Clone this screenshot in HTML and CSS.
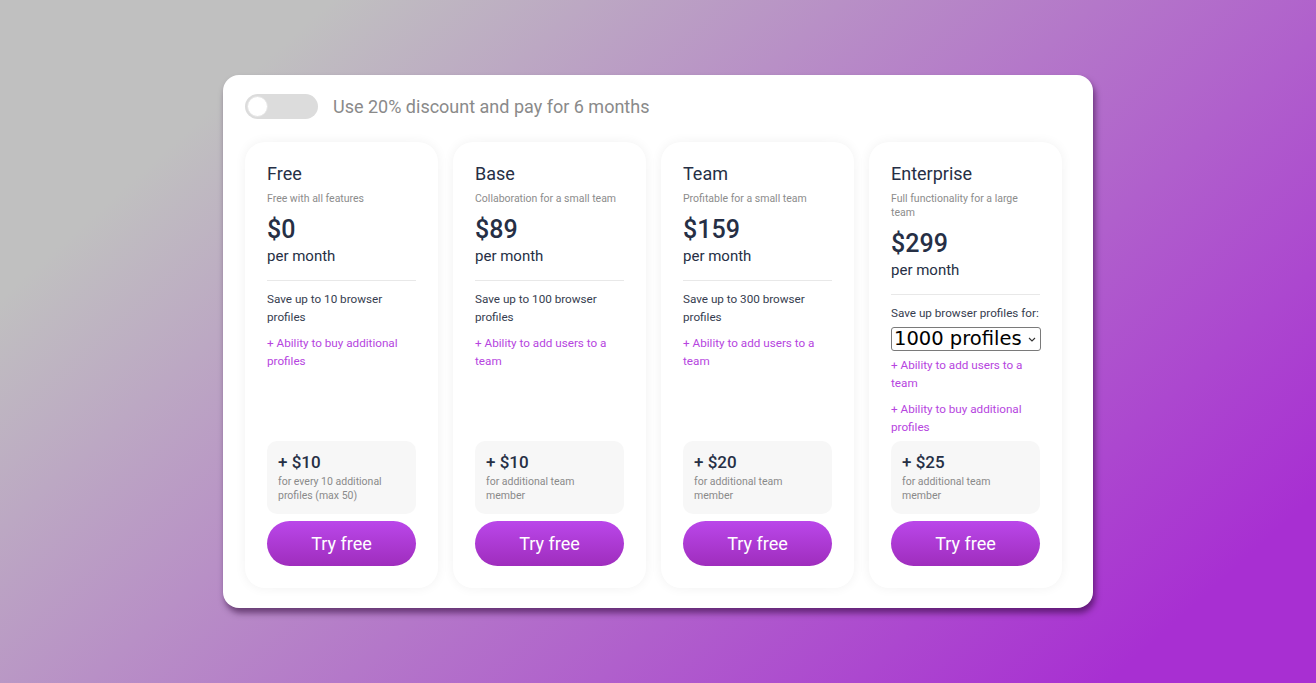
FILE: index.html
```html
<!DOCTYPE html>
<html lang="en">
<head>
<meta charset="utf-8">
<title>Pricing</title>
<link rel="stylesheet" href="styles.css">
</head>
<body>
<div class="page">
  <div class="panel">
    <div class="discount">
      <span class="toggle"><span class="knob"></span></span>
      <span class="discount-text">Use 20% discount and pay for 6 months</span>
    </div>
    <div class="plans">
      <div class="card">
        <div class="name">Free</div>
        <div class="desc">Free with all features</div>
        <div class="price">$0</div>
        <div class="period">per month</div>
        <div class="divider"></div>
        <div class="features">
          <div class="feat">Save up to 10 browser profiles</div>
          <div class="feat extra">+ Ability to buy additional profiles</div>
        </div>
        <div class="foot">
          <div class="addon">
            <div class="addon-price">+ $10</div>
            <div class="addon-note">for every 10 additional profiles (max 50)</div>
          </div>
          <button class="btn">Try free</button>
        </div>
      </div>
      <div class="card">
        <div class="name">Base</div>
        <div class="desc">Collaboration for a small team</div>
        <div class="price">$89</div>
        <div class="period">per month</div>
        <div class="divider"></div>
        <div class="features">
          <div class="feat">Save up to 100 browser profiles</div>
          <div class="feat extra">+ Ability to add users to a team</div>
        </div>
        <div class="foot">
          <div class="addon">
            <div class="addon-price">+ $10</div>
            <div class="addon-note">for additional team member</div>
          </div>
          <button class="btn">Try free</button>
        </div>
      </div>
      <div class="card">
        <div class="name">Team</div>
        <div class="desc">Profitable for a small team</div>
        <div class="price">$159</div>
        <div class="period">per month</div>
        <div class="divider"></div>
        <div class="features">
          <div class="feat">Save up to 300 browser profiles</div>
          <div class="feat extra">+ Ability to add users to a team</div>
        </div>
        <div class="foot">
          <div class="addon">
            <div class="addon-price">+ $20</div>
            <div class="addon-note">for additional team member</div>
          </div>
          <button class="btn">Try free</button>
        </div>
      </div>
      <div class="card">
        <div class="name">Enterprise</div>
        <div class="desc">Full functionality for a large team</div>
        <div class="price">$299</div>
        <div class="period">per month</div>
        <div class="divider"></div>
        <div class="features">
          <div class="feat">Save up browser profiles for:</div>
          <div class="select-wrap">
            <select class="select">
              <option>1000 profiles</option>
              <option>2000 profiles</option>
            </select>
            <svg class="chev" width="8" height="5" viewBox="0 0 8 5" aria-hidden="true"><path d="M1 1 L4 4 L7 1" fill="none" stroke="#333" stroke-width="1.1"/></svg>
          </div>
          <div class="feat extra tight">+ Ability to add users to a team</div>
          <div class="feat extra">+ Ability to buy additional profiles</div>
        </div>
        <div class="foot">
          <div class="addon">
            <div class="addon-price">+ $25</div>
            <div class="addon-note">for additional team member</div>
          </div>
          <button class="btn">Try free</button>
        </div>
      </div>
    </div>
  </div>
</div>
</body>
</html>
```

FILE: styles.css
```css
* { box-sizing: border-box; }
html, body { margin: 0; padding: 0; }
body {
  width: 1316px;
  height: 683px;
  overflow: hidden;
  font-family: Roboto, "Liberation Sans", sans-serif;
  background: linear-gradient(138deg, #c0c0c0 16%, #a82fd2 90%);
  color: #262f45;
}
.page {
  padding: 75px 0 0 223px;
}
.panel {
  width: 870px;
  height: 533px;
  background: #fff;
  border-radius: 16px;
  padding: 19px 31px 20px 22px;
  box-shadow: 2px 5px 6px rgba(40, 0, 50, 0.55);
  display: flex;
  flex-direction: column;
}
.discount {
  display: flex;
  align-items: center;
  height: 25px;
}
.toggle {
  width: 73px;
  height: 25px;
  border-radius: 13px;
  background: #dcdcdc;
  display: flex;
  align-items: center;
  padding-left: 2px;
}
.knob {
  width: 21px;
  height: 21px;
  border-radius: 50%;
  background: #fff;
  border: 1px solid #e4e4e4;
}
.discount-text {
  margin-left: 15px;
  font-size: 18px;
  color: #8a8a8a;
}
.plans {
  margin-top: 23px;
  display: grid;
  grid-template-columns: repeat(4, 193px);
  gap: 15px;
  flex: 1;
}
.card {
  background: #fff;
  border-radius: 20px;
  box-shadow: 0 0 12px rgba(0, 0, 0, 0.06);
  padding: 20px 22px 22px;
  display: flex;
  flex-direction: column;
}
.name {
  font-size: 18px;
  line-height: 24px;
  font-weight: 400;
  color: #262f45;
}
.desc {
  margin-top: 6px;
  font-size: 10.5px;
  line-height: 14px;
  color: #8c8c8c;
}
.price {
  margin-top: 8px;
  font-size: 25px;
  line-height: 32px;
  font-weight: 500;
  color: #262f45;
}
.period {
  font-size: 15px;
  line-height: 20px;
  color: #262f45;
}
.divider {
  margin-top: 13.5px;
  height: 1px;
  background: #e8e8e8;
}
.features {
  margin-top: 10.5px;
  display: flex;
  flex-direction: column;
  padding-bottom: 4px;
}
.feat {
  font-size: 11.7px;
  line-height: 17.5px;
  color: #363d4f;
}
.feat + .feat { margin-top: 9px; }
.feat.extra { color: #b645e0; }
.feat.tight { margin-top: 6px; }
.select-wrap {
  margin-top: 4.5px;
  position: relative;
  width: 150px;
  height: 24px;
}
.select {
  display: block;
  width: 150px;
  height: 24px;
  appearance: none;
  -webkit-appearance: none;
  font-family: "DejaVu Sans", "Open Sans", sans-serif;
  font-size: 19.5px;
  line-height: 22px;
  color: #000;
  background: #fff;
  border: 1px solid #7a7a7a;
  border-radius: 3px;
  padding: 0 0 0 2px;
}
.chev {
  position: absolute;
  right: 5px;
  top: 10px;
  pointer-events: none;
}
.foot {
  margin-top: auto;
  display: flex;
  flex-direction: column;
  gap: 7px;
}
.addon {
  background: #f7f7f7;
  border-radius: 10px;
  padding: 10px 11px 11px;
}
.addon-price {
  font-size: 17px;
  line-height: 22px;
  font-weight: 500;
  color: #262f45;
}
.addon-note {
  margin-top: 2px;
  font-size: 10.5px;
  line-height: 14px;
  color: #8a8a8a;
}
.btn {
  height: 45px;
  border: none;
  border-radius: 23px;
  background: linear-gradient(180deg, #ba47ea 0%, #9f2dbd 100%);
  color: #fff;
  font-family: Roboto, "Liberation Sans", sans-serif;
  font-size: 18px;
  cursor: pointer;
}
```
